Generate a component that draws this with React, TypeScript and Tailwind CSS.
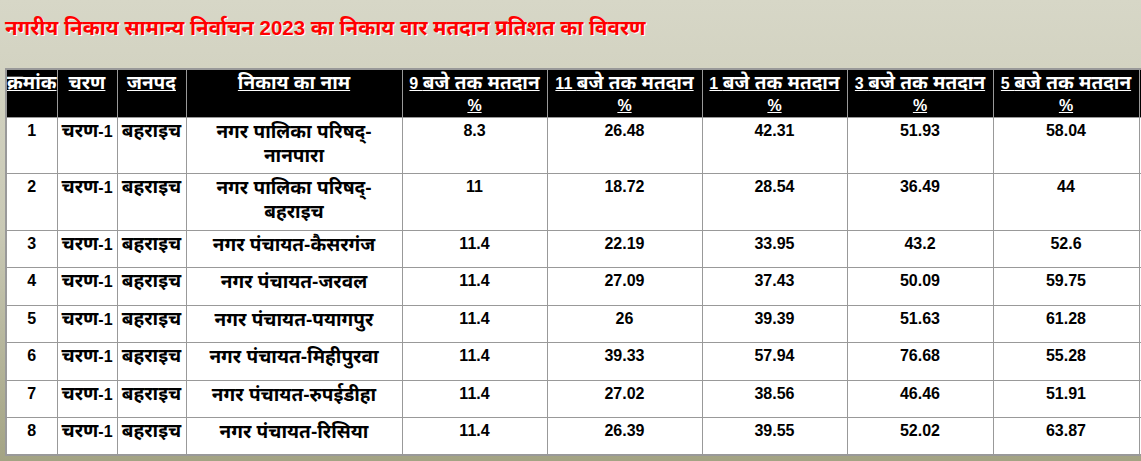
import React from "react";

type Row = {
  n: string;
  name: string[];
  v: string[];
  h: string;
};

const rows: Row[] = [
  { n: "1", name: ["नगर पालिका परिषद्-", "नानपारा"], v: ["8.3", "26.48", "42.31", "51.93", "58.04"], h: "h-[56px]" },
  { n: "2", name: ["नगर पालिका परिषद्-", "बहराइच"], v: ["11", "18.72", "28.54", "36.49", "44"], h: "h-[57px]" },
  { n: "3", name: ["नगर पंचायत-कैसरगंज"], v: ["11.4", "22.19", "33.95", "43.2", "52.6"], h: "h-[37px]" },
  { n: "4", name: ["नगर पंचायत-जरवल"], v: ["11.4", "27.09", "37.43", "50.09", "59.75"], h: "h-[38px]" },
  { n: "5", name: ["नगर पंचायत-पयागपुर"], v: ["11.4", "26", "39.39", "51.63", "61.28"], h: "h-[37px]" },
  { n: "6", name: ["नगर पंचायत-मिहीपुरवा"], v: ["11.4", "39.33", "57.94", "76.68", "55.28"], h: "h-[38px]" },
  { n: "7", name: ["नगर पंचायत-रुपईडीहा"], v: ["11.4", "27.02", "38.56", "46.46", "51.91"], h: "h-[37px]" },
  { n: "8", name: ["नगर पंचायत-रिसिया"], v: ["11.4", "26.39", "39.55", "52.02", "63.87"], h: "h-[37px]" },
];

const heads: [string, string][] = [
  ["9 ", "बजे तक मतदान"],
  ["11 ", "बजे तक मतदान"],
  ["1 ", "बजे तक मतदान"],
  ["3 ", "बजे तक मतदान"],
  ["5 ", "बजे तक मतदान"],
];

function D({ children }: { children: React.ReactNode }) {
  return <span className="text-[19px]">{children}</span>;
}

const th = "border border-[#999999] align-top p-0 pt-[2px] leading-[22px] underline";
const td = "border border-[#999999] align-top p-0 pt-[2px] text-center leading-[22px]";

export default function App() {
  return (
    <div className="w-[1141px] h-[461px] overflow-hidden bg-[linear-gradient(180deg,#d7d7c7_0%,#c9c9b5_50%,#a3a383_100%)] font-['Liberation_Sans','Noto_Sans',sans-serif]">
      <div className="pl-[5px] pt-[16px] h-[68px] text-[20.5px] leading-[24px] font-bold text-[#ff0000] [text-shadow:1px_1px_0_#ffffff] whitespace-nowrap">
        नगरीय निकाय सामान्य निर्वाचन 2023 का निकाय वार मतदान प्रतिशत का विवरण
      </div>
      <div className="pl-[5px]">
        <table className="table-fixed border-collapse border-2 border-[#999999] w-[1300px] text-[16px] font-bold">
          <colgroup>
            <col className="w-[51px]" />
            <col className="w-[60px]" />
            <col className="w-[69px]" />
            <col className="w-[216px]" />
            <col className="w-[145px]" />
            <col className="w-[155px]" />
            <col className="w-[145px]" />
            <col className="w-[146px]" />
            <col className="w-[146px]" />
            <col className="w-[167px]" />
          </colgroup>
          <thead>
            <tr className="h-[45px] bg-black text-white">
              <th className={th + " whitespace-nowrap overflow-hidden text-left"}>
                <D>क्रमांक</D>
              </th>
              <th className={th}>
                <D>चरण</D>
              </th>
              <th className={th}>
                <D>जनपद</D>
              </th>
              <th className={th}>
                <D>निकाय का नाम</D>
              </th>
              {heads.map(([a, b]) => (
                <th key={a} className={th}>
                  {a}
                  <D>{b}</D>
                  <br />%
                </th>
              ))}
              <th className="border border-[#999999] align-top p-0"></th>
            </tr>
          </thead>
          <tbody className="bg-white text-black">
            {rows.map((r) => (
              <tr key={r.n} className={r.h}>
                <td className={td}>{r.n}</td>
                <td className={td + " whitespace-nowrap"}>
                  <D>चरण</D>-1
                </td>
                <td className={td + " whitespace-nowrap"}>
                  <D>बहराइच</D>
                </td>
                <td className="border border-[#999999] align-top p-0 pt-[2px] text-center leading-[23px]">
                  {r.name.map((l, i) => (
                    <div key={i}>
                      <D>{l}</D>
                    </div>
                  ))}
                </td>
                {r.v.map((v, i) => (
                  <td key={i} className={td}>
                    {v}
                  </td>
                ))}
                <td className="border border-[#999999] align-top p-0"></td>
              </tr>
            ))}
          </tbody>
        </table>
      </div>
    </div>
  );
}
